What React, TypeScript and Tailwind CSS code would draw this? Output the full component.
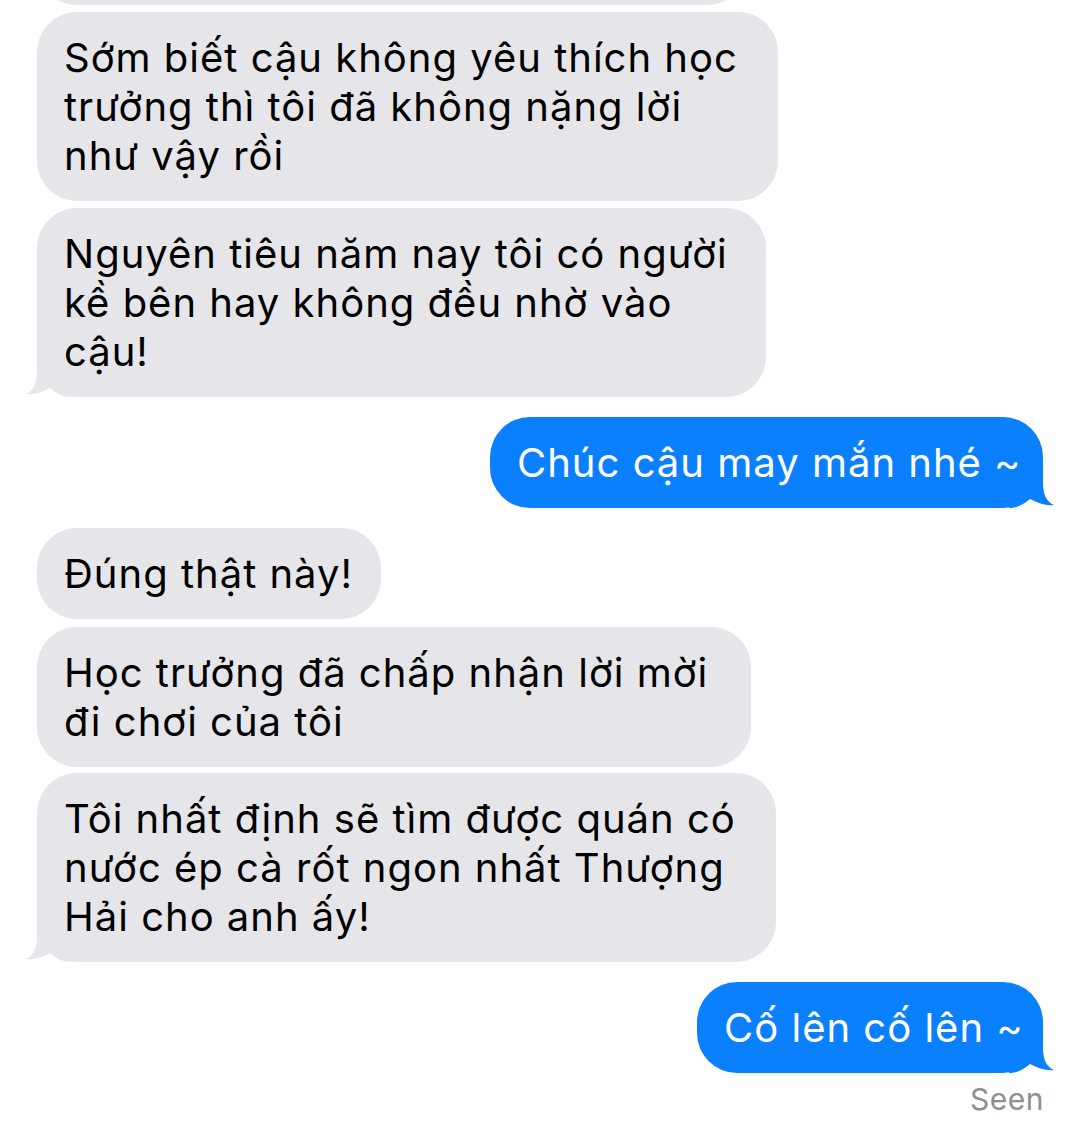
type Side = "in" | "out";

type Message = {
  side: Side;
  width: string;
  lines: string[];
  tail?: boolean;
  gap: string;
};

const MESSAGES: Message[] = [
  {
    side: "in",
    width: "w-[741px]",
    gap: "mt-[7px]",
    lines: ["Sớm biết cậu không yêu thích học", "trưởng thì tôi đã không nặng lời", "như vậy rồi"],
  },
  {
    side: "in",
    width: "w-[729px]",
    gap: "mt-[7px]",
    tail: true,
    lines: ["Nguyên tiêu năm nay tôi có người", "kề bên hay không đều nhờ vào", "cậu!"],
  },
  { side: "out", width: "w-[553px]", gap: "mt-[20px]", tail: true, lines: ["Chúc cậu may mắn nhé ~"] },
  { side: "in", width: "w-[344px]", gap: "mt-[20px]", lines: ["Đúng thật này!"] },
  {
    side: "in",
    width: "w-[714px]",
    gap: "mt-[8px]",
    lines: ["Học trưởng đã chấp nhận lời mời", "đi chơi của tôi"],
  },
  {
    side: "in",
    width: "w-[739px]",
    gap: "mt-[6px]",
    tail: true,
    lines: ["Tôi nhất định sẽ tìm được quán có", "nước ép cà rốt ngon nhất Thượng", "Hải cho anh ấy!"],
  },
  { side: "out", width: "w-[346px]", gap: "mt-[20px]", tail: true, lines: ["Cố lên cố lên ~"] },
];

const Tail = ({ side }: { side: Side }) => (
  <svg
    width="45"
    height="40"
    viewBox="0 0 45 40"
    className={
      side === "in"
        ? "absolute bottom-0 left-[-11px]"
        : "absolute bottom-0 right-[-11px] -scale-x-100"
    }
  >
    <path
      d="M11 0 L11 15 C11 27 7 34 0 37 C8 38 16 35 24 31 C30 36 36 40 45 40 L45 0 Z"
      fill={side === "in" ? "#e5e5ea" : "#0b80ff"}
    />
  </svg>
);

const Bubble = ({ msg }: { msg: Message }) => {
  const isIn = msg.side === "in";
  return (
    <div className={`flex ${isIn ? "justify-start pl-[37px]" : "justify-end pr-[37px]"} ${msg.gap}`}>
      <div
        className={`relative rounded-[40px] py-[21px] pl-[27px] text-[40px] leading-[49px] tracking-[1px] whitespace-nowrap ${msg.width} ${
          isIn ? "bg-[#e5e5ea] text-black" : "bg-[#0b80ff] text-white"
        }`}
      >
        {msg.tail && <Tail side={msg.side} />}
        <div className="relative">
          {msg.lines.map((l, i) => (
            <div key={i}>{l}</div>
          ))}
        </div>
      </div>
    </div>
  );
};

export default function App() {
  return (
    <div
      className="h-[1142px] w-[1080px] overflow-hidden bg-white antialiased"
      style={{ fontFamily: "Inter, 'Noto Sans', sans-serif" }}
    >
      <div className="pl-[37px]">
        <div className="-mt-[86px] h-[91px] w-[710px] rounded-[40px] bg-[#e5e5ea]" />
      </div>
      {MESSAGES.map((m, i) => (
        <Bubble key={i} msg={m} />
      ))}
      <div className="mt-[8px] pr-[36px] text-right text-[30px] leading-[36px] tracking-[0.5px] text-[#8e8e93]">
        Seen
      </div>
    </div>
  );
}
